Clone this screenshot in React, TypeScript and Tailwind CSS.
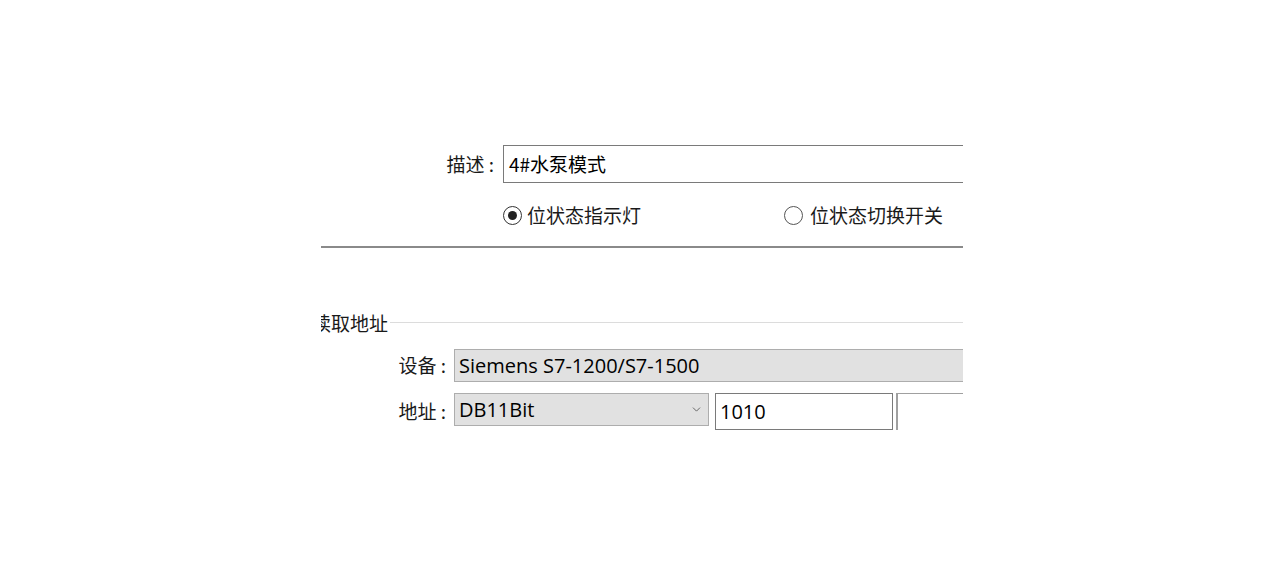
import { ChevronDown } from "lucide-react"

const font = "font-['Microsoft_YaHei','Noto_Sans_CJK_SC',sans-serif]"
const latin = "font-['Segoe_UI','Open_Sans','Noto_Sans_CJK_SC',sans-serif] text-[20px]"

function Label({ text }: { text: string }) {
  return (
    <div className="flex w-[133px] shrink-0 justify-end pr-[8px] text-[19px] text-[#1a1a1a]">
      {text}
    </div>
  )
}

export default function App() {
  return (
    <div className={`relative h-[588px] w-full overflow-hidden bg-white ${font}`}>
      <div className="ml-[321px] w-[642px] overflow-hidden pt-[145px]">
        <div className="flex items-center">
          <div className="flex w-[182px] shrink-0 justify-end pr-[9px] text-[19px] text-[#1a1a1a]">
            描述 :
          </div>
          <div className="flex h-[38px] flex-1 items-center border border-r-0 border-[#7a7a7a] pl-[5px] text-[19px] text-black">
            4#水泵模式
          </div>
        </div>

        <div className="mt-[18px] flex items-center text-[19px] text-[#1a1a1a]">
          <div className="ml-[182px] flex items-center gap-[5px]">
            <span className="flex h-[19px] w-[19px] items-center justify-center rounded-full border-[1.5px] border-[#333]">
              <span className="h-[9px] w-[9px] rounded-full bg-[#222]" />
            </span>
            位状态指示灯
          </div>
          <div className="ml-[143px] flex items-center gap-[7px]">
            <span className="h-[19px] w-[19px] rounded-full border-[1.5px] border-[#555]" />
            位状态切换开关
          </div>
        </div>

        <div className="mt-[16px] h-[2px] bg-[#8a8a8a]" />

        <div className="mt-[61px] flex items-center">
          <span className="-ml-[9px] text-[19px] text-[#1a1a1a]">读取地址</span>
          <div className="ml-[2px] h-px flex-1 bg-[#dcdcdc]" />
        </div>

        <div className="mt-[12px] flex items-center">
          <Label text="设备 :" />
          <div className={`flex h-[33px] flex-1 items-center border border-r-0 border-[#adadad] bg-[#e1e1e1] pl-[4px] text-black ${latin}`}>
            Siemens S7-1200/S7-1500
          </div>
        </div>

        <div className="mt-[11px] flex items-start">
          <div className="flex h-[37px] items-center">
            <Label text="地址 :" />
          </div>
          <div className={`flex h-[33px] w-[255px] items-center justify-between border border-[#adadad] bg-[#e1e1e1] pl-[4px] pr-[5px] text-black ${latin}`}>
            DB11Bit
            <ChevronDown className="h-[13px] w-[13px] text-[#555]" strokeWidth={1.6} />
          </div>
          <div className={`ml-[6px] flex h-[37px] w-[178px] items-center border border-[#7a7a7a] pl-[4px] text-black ${latin}`}>
            1010
          </div>
          <div className="ml-[3px] h-[37px] flex-1 border-l-2 border-t border-[#a0a0a0]" />
        </div>
      </div>
    </div>
  )
}
